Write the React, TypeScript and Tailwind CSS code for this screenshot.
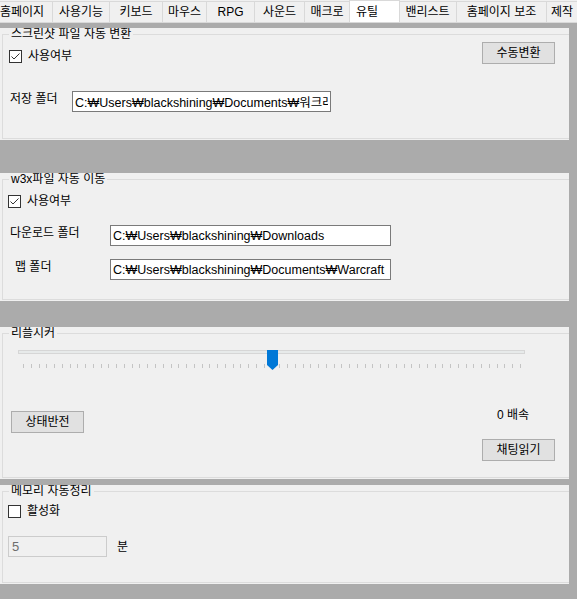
import React from "react";

const TABS = [
    { label: "홈페이지", cls: "w-[53px] justify-start" },
    { label: "사용기능", cls: "w-[57px] justify-center" },
    { label: "키보드", cls: "w-[53px] justify-center" },
    { label: "마우스", cls: "w-[44px] justify-center" },
    { label: "RPG", cls: "w-[48px] justify-center" },
    { label: "사운드", cls: "w-[50px] justify-center" },
    { label: "매크로", cls: "w-[45px] justify-center" },
    { label: "유틸", cls: "w-[51px] justify-start", active: true },
    { label: "밴리스트", cls: "w-[58px] justify-center" },
    { label: "홈페이지 보조", cls: "w-[90px] justify-center" },
    { label: "제작", cls: "w-[40px] justify-start pl-[4px]" },
];

function Tabs() {
    return (
        <div className="flex h-[23px] items-end overflow-hidden border-b border-[#d9d9d9] bg-[#f0f0f0]">
            {TABS.map((t) =>
                t.active ? (
                    <div
                        key={t.label}
                        className={`relative z-10 -mx-[1px] -mb-[1px] flex h-[23px] shrink-0 items-start border border-b-0 border-[#d9d9d9] bg-white pl-[6px] pt-[2px] ${t.cls}`}
                    >
                        {t.label}
                    </div>
                ) : (
                    <div
                        key={t.label}
                        className={`flex h-[21px] shrink-0 items-center border-r border-t border-[#d9d9d9] bg-[#f0f0f0] ${t.cls}`}
                    >
                        {t.label}
                    </div>
                )
            )}
        </div>
    );
}

function Group({ title, height, fieldH, children }: { title: string; height: string; fieldH: string; children: React.ReactNode }) {
    return (
        <div className={`w-[569px] shrink-0 overflow-hidden bg-[#f0f0f0] ${height}`}>
            <fieldset className={`ml-[2px] w-[600px] border border-[#dcdcdc] ${fieldH}`}>
                <legend className="ml-[6px] px-[2px] text-[12px] leading-[13px]">{title}</legend>
                {children}
            </fieldset>
        </div>
    );
}

function CheckBox({ checked, label }: { checked?: boolean; label: string }) {
    return (
        <div className="flex items-center gap-[6px]">
            <div className="flex h-[13px] w-[13px] items-center justify-center border border-[#333333] bg-white">
                {checked && (
                    <svg width="11" height="11" viewBox="0 0 11 11">
                        <path d="M1.5 5.5 L4 8 L9.5 2.5" fill="none" stroke="#333333" strokeWidth="1" />
                    </svg>
                )}
            </div>
            <span className="leading-[14px]">{label}</span>
        </div>
    );
}

function Button({ children }: { children: React.ReactNode }) {
    return (
        <button className="flex h-[22px] w-[73px] items-center justify-center border border-[#adadad] bg-[#e1e1e1] leading-[14px]">
            {children}
        </button>
    );
}

function TextBox({ value, width }: { value: string; width: string }) {
    return (
        <input
            readOnly
            value={value}
            className={`h-[21px] shrink-0 border border-[#7a7a7a] bg-white px-[2px] text-[12.5px] leading-[19px] outline-none ${width}`}
        />
    );
}

export default function App() {
    const ticks = Array.from({ length: 65 }, (_, i) => i);

    return (
        <div className="flex h-[599px] w-[577px] flex-col overflow-hidden bg-[#ababab] font-['Liberation_Sans','Noto_Sans_CJK_KR',sans-serif] text-[12px] text-black">
            <Tabs />
            <div className="h-[5px] shrink-0" />

            <Group title="스크린샷 파일 자동 변환" height="h-[112px]" fieldH="h-[111px]">
                <div className="flex w-[552px] items-start justify-between pl-[6px]">
                    <div className="mt-[8px]">
                        <CheckBox checked label="사용여부" />
                    </div>
                    <div className="mt-[1px]">
                        <Button>수동변환</Button>
                    </div>
                </div>
                <div className="mt-[27px] flex items-start pl-[7px]">
                    <span className="mt-[1px] w-[62px] leading-[14px]">저장 폴더</span>
                    <TextBox value="C:₩Users₩blackshining₩Documents₩워크래프트" width="w-[259px]" />
                </div>
            </Group>

            <div className="h-[33px] shrink-0" />

            <Group title="w3x파일 자동 이동" height="h-[128px]" fieldH="h-[127px]">
                <div className="mt-[8px] pl-[5px]">
                    <CheckBox checked label="사용여부" />
                </div>
                <div className="mt-[17px] flex items-start pl-[7px]">
                    <span className="mt-[1px] w-[100px] leading-[14px]">다운로드 폴더</span>
                    <TextBox value="C:₩Users₩blackshining₩Downloads" width="w-[281px]" />
                </div>
                <div className="mt-[13px] flex items-start pl-[12px]">
                    <span className="mt-[1px] w-[95px] leading-[14px]">맵 폴더</span>
                    <TextBox value="C:₩Users₩blackshining₩Documents₩Warcraft III₩Maps" width="w-[281px]" />
                </div>
            </Group>

            <div className="h-[26px] shrink-0" />

            <Group title="리플시커" height="h-[152px]" fieldH="h-[151px]">
                <div className="relative ml-[15px] mt-[10px] w-[507px]">
                    <div className="mt-[6px] h-[4px] border border-[#d6d6d6] bg-[#e7eaea]" />
                    <div className="ml-[5px] mt-[10px] flex w-[498px] justify-between">
                        {ticks.map((i) => (
                            <div key={i} className="h-[4px] w-px bg-[#c4c4c4]" />
                        ))}
                    </div>
                    <svg className="absolute left-[249px] top-0" width="11" height="20" viewBox="0 0 11 20">
                        <path d="M0 0 H11 V15 L5.5 20 L0 15 Z" fill="#0078d7" />
                    </svg>
                </div>
                <div className="mt-[40px] flex w-[552px] items-start justify-between pl-[8px]">
                    <div className="mt-[3px]">
                        <Button>상태반전</Button>
                    </div>
                    <div className="flex w-[73px] flex-col">
                        <span className="ml-[15px] leading-[14px]">0 배속</span>
                        <div className="mt-[17px]">
                            <Button>채팅읽기</Button>
                        </div>
                    </div>
                </div>
            </Group>

            <div className="h-[6px] shrink-0" />

            <Group title="메모리 자동정리" height="h-[99px]" fieldH="h-[98px]">
                <div className="mt-[6px] pl-[5px]">
                    <CheckBox label="활성화" />
                </div>
                <div className="mt-[18px] flex items-center pl-[5px]">
                    <input
                        readOnly
                        disabled
                        value="5"
                        className="h-[21px] w-[99px] border border-[#cccccc] bg-[#f0f0f0] px-[3px] text-[13px] text-[#6d6d6d] outline-none"
                    />
                    <span className="ml-[10px] leading-[14px]">분</span>
                </div>
            </Group>
        </div>
    );
}
